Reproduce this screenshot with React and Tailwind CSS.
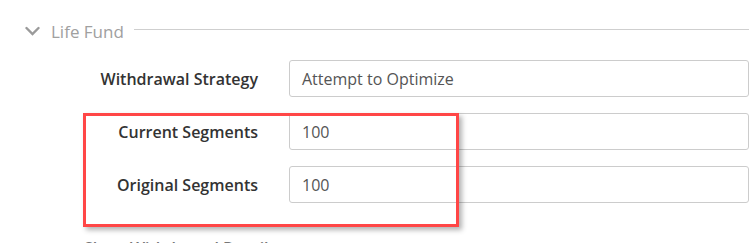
import React from "react";

const rows = [
  { label: "Withdrawal Strategy", value: "Attempt to Optimize" },
  { label: "Current Segments", value: "100" },
  { label: "Original Segments", value: "100" },
];

const App = () => {
  return (
    <div
      className="relative w-[749px] h-[243px] overflow-hidden bg-white"
      style={{ fontFamily: '"Open Sans", "Liberation Sans", sans-serif' }}
    >
      {/* Section header */}
      <div className="flex items-center pl-[25px] pt-[19px] h-[43px]">
        <svg width="15" height="10" viewBox="0 0 15 10" className="text-[#9a9a9a]">
          <path d="M1.5 2 L7.5 8 L13.5 2" fill="none" stroke="currentColor" strokeWidth="2.4" strokeLinecap="round" />
        </svg>
        <span className="ml-[11px] text-[17px] text-[#a0a0a0] leading-none">Life Fund</span>
        <div className="flex-1 ml-[10px] h-px bg-[#cfcfcf] -translate-y-[2px]" />
      </div>

      {/* Form rows */}
      <div className="flex flex-col gap-[16px] mt-[17px]">
        {rows.map((row) => (
          <div key={row.label} className="flex items-center">
            <label className="w-[258px] text-right text-[16px] font-semibold text-[#333]">
              {row.label}
            </label>
            <div className="ml-[31px] flex-1 h-[37px] flex items-center pl-[12px] border border-[#cccccc] rounded-[3px] text-[16px] text-[#555]">
              {row.value}
            </div>
          </div>
        ))}
        <div className="pl-[84px] mt-[17px] text-[16px] font-semibold text-[#777]">Show Withdrawal Details</div>
      </div>

      {/* Annotation highlight */}
      <div className="absolute left-[83px] top-[113px] w-[376px] h-[114px] border-[3px] border-[#ff4646] shadow-[3px_3px_5px_rgba(0,0,0,0.3)]" />
    </div>
  );
};

export default App;
